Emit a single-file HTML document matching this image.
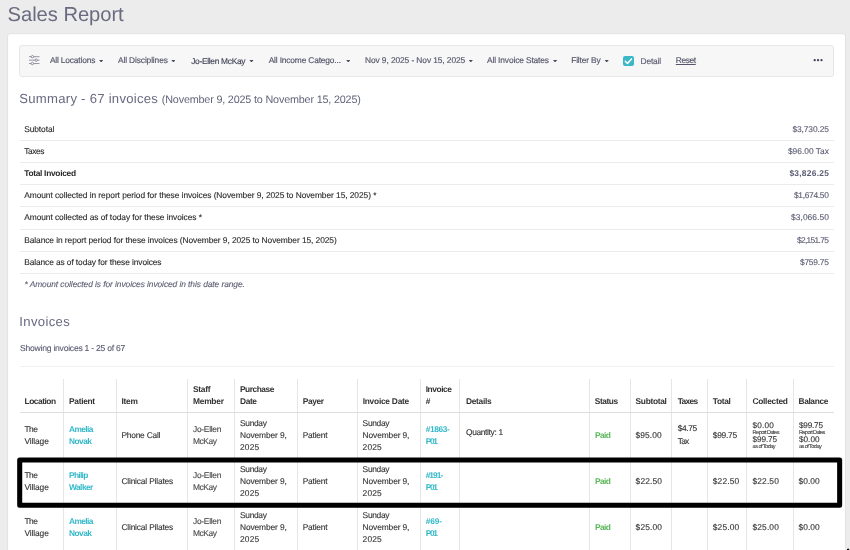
<!DOCTYPE html>
<html lang="en">
<head>
<meta charset="utf-8">
<title>Sales Report</title>
<style>
html,body{margin:0;padding:0;}
body{width:850px;height:550px;overflow:hidden;background:#ececec;position:relative;font-family:"Liberation Sans",sans-serif;}
.panel{position:absolute;left:0;top:0;width:850px;height:550px;}
.fbar{position:absolute;left:19.4px;top:44.8px;width:812.4px;height:30px;background:#f7f7f7;border:1px solid #e7e7e7;border-radius:3px;}
.txt{position:absolute;left:0;top:0;width:850px;height:550px;will-change:transform;text-rendering:geometricPrecision;-webkit-text-stroke:0.12px;}
.t{position:absolute;white-space:nowrap;display:block;}
.caret{position:absolute;display:block;clip-path:polygon(0 0,100% 0,50% 100%);}
.hl{position:absolute;left:19.5px;width:814px;height:1px;background:#ebebeb;}
.hl.hd{background:#dedede;}
.vl{position:absolute;top:379.2px;width:1px;height:175px;background:#e6e6e6;}
.frame{position:absolute;left:0;top:0;width:850px;height:550px;pointer-events:none;}
.cb{position:absolute;left:623.2px;top:55.6px;width:10.8px;height:10.6px;background:#3bb8c8;border-radius:2px;}
.cb svg{position:absolute;left:0;top:0;width:100%;height:100%;}
.dots{position:absolute;left:813px;top:58px;width:12px;height:4px;fill:#3f4056;}
.ficon{position:absolute;left:28px;top:54px;width:13px;height:13px;}
.cursor{position:absolute;left:842px;top:544px;width:8px;height:6px;}
</style>
</head>
<body>
<svg class="panel" width="850" height="550" viewBox="0 0 850 550"><rect x="7.6" y="33.7" width="837.9" height="540" rx="2.5" fill="#fff" stroke="#e3e3e3" stroke-width="1"/></svg>
<div class="fbar"></div>
<svg class="ficon" viewBox="0 0 13 13" fill="none" stroke="#747588" stroke-width="0.75">
<line x1="1" y1="2.7" x2="11.5" y2="2.7"/><line x1="1" y1="6.2" x2="11.5" y2="6.2"/><line x1="1" y1="9.55" x2="11.5" y2="9.55"/>
<circle cx="4.5" cy="2.7" r="1.2" fill="#f7f7f7"/><circle cx="8.2" cy="6.2" r="1.2" fill="#f7f7f7"/><circle cx="4.4" cy="9.55" r="1.2" fill="#f7f7f7"/>
</svg>
<div class="cb"><svg viewBox="0 0 10.8 10.6"><path d="M2.4 5.4 L4.5 7.5 L8.5 2.9" fill="none" stroke="#fff" stroke-width="1.5" stroke-linecap="round" stroke-linejoin="round"/></svg></div>
<svg class="dots" viewBox="0 0 12 4"><circle cx="1.7" cy="2.2" r="1.15"/><circle cx="5.05" cy="2.2" r="1.15"/><circle cx="8.5" cy="2.2" r="1.15"/></svg>
<div class="txt">
<span class="t" style="left:7.60px;top:5.00px;font-size:20.2px;line-height:20.2px;letter-spacing:-0.052px;color:#6a6b80;-webkit-text-stroke:0;">Sales Report</span>
<span class="t" style="left:49.90px;top:56.00px;font-size:8.4px;line-height:8.4px;letter-spacing:-0.169px;color:#55566b;-webkit-text-stroke:0.16px;">All Locations</span>
<i class="caret" style="left:99.10px;top:60.10px;width:4.2px;height:2.4px;background:#4a4b5e"></i>
<span class="t" style="left:118.00px;top:56.00px;font-size:8.4px;line-height:8.4px;letter-spacing:-0.130px;color:#55566b;-webkit-text-stroke:0.16px;">All Disciplines</span>
<i class="caret" style="left:171.30px;top:60.10px;width:4.2px;height:2.4px;background:#4a4b5e"></i>
<span class="t" style="left:191.20px;top:57.00px;font-size:8.4px;line-height:8.4px;letter-spacing:-0.296px;color:#45465a;-webkit-text-stroke:0.16px;">Jo-Ellen McKay</span>
<i class="caret" style="left:249.40px;top:60.10px;width:4.2px;height:2.4px;background:#4a4b5e"></i>
<span class="t" style="left:268.70px;top:56.00px;font-size:8.4px;line-height:8.4px;letter-spacing:-0.165px;color:#55566b;-webkit-text-stroke:0.16px;">All Income Catego...</span>
<i class="caret" style="left:346.20px;top:60.10px;width:4.2px;height:2.4px;background:#4a4b5e"></i>
<span class="t" style="left:365.00px;top:56.00px;font-size:8.4px;line-height:8.4px;letter-spacing:-0.089px;color:#55566b;-webkit-text-stroke:0.16px;">Nov 9, 2025 - Nov 15, 2025</span>
<i class="caret" style="left:468.70px;top:60.10px;width:4.2px;height:2.4px;background:#4a4b5e"></i>
<span class="t" style="left:487.00px;top:56.00px;font-size:8.4px;line-height:8.4px;letter-spacing:-0.131px;color:#55566b;-webkit-text-stroke:0.16px;">All Invoice States</span>
<i class="caret" style="left:553.00px;top:60.10px;width:4.2px;height:2.4px;background:#4a4b5e"></i>
<span class="t" style="left:571.20px;top:56.00px;font-size:8.4px;line-height:8.4px;letter-spacing:-0.163px;color:#55566b;-webkit-text-stroke:0.16px;">Filter By</span>
<i class="caret" style="left:604.60px;top:60.10px;width:4.2px;height:2.4px;background:#4a4b5e"></i>
<span class="t" style="left:640.50px;top:57.00px;font-size:8.4px;line-height:8.4px;letter-spacing:-0.155px;color:#5f6073;-webkit-text-stroke:0.16px;">Detail</span>
<span class="t" style="left:675.80px;top:56.00px;font-size:8.4px;line-height:8.4px;letter-spacing:-0.386px;color:#55566b;-webkit-text-stroke:0.16px;text-decoration:underline;">Reset</span>
<span class="t" style="left:19.30px;top:92.00px;font-size:13.1px;line-height:13.1px;letter-spacing:0.269px;color:#686980;-webkit-text-stroke:0;">Summary - 67 invoices</span>
<span class="t" style="left:161.80px;top:95.00px;font-size:10.8px;line-height:10.8px;letter-spacing:-0.179px;color:#62637a;-webkit-text-stroke:0;">(November 9, 2025 to November 15, 2025)</span>
<span class="t" style="left:24.20px;top:125.00px;font-size:8.4px;line-height:8.4px;letter-spacing:-0.075px;color:#2a2a2a;">Subtotal</span>
<span class="t" style="left:792.50px;top:125.00px;font-size:8.4px;line-height:8.4px;letter-spacing:-0.109px;color:#5b5c72;">$3,730.25</span>
<div class="hl" style="top:139.70px"></div>
<span class="t" style="left:24.20px;top:147.00px;font-size:8.4px;line-height:8.4px;letter-spacing:-0.411px;color:#2a2a2a;">Taxes</span>
<span class="t" style="left:787.90px;top:147.00px;font-size:8.4px;line-height:8.4px;letter-spacing:0.017px;color:#5b5c72;">$96.00 Tax</span>
<div class="hl" style="top:161.90px"></div>
<span class="t" style="left:24.20px;top:169.00px;font-size:8.4px;line-height:8.4px;letter-spacing:-0.296px;color:#2a2a2a;font-weight:bold;-webkit-text-stroke:0;">Total Invoiced</span>
<span class="t" style="left:789.40px;top:169.00px;font-size:8.4px;line-height:8.4px;letter-spacing:0.279px;color:#5b5c72;font-weight:bold;-webkit-text-stroke:0;">$3,826.25</span>
<div class="hl" style="top:184.10px"></div>
<span class="t" style="left:24.20px;top:191.00px;font-size:8.4px;line-height:8.4px;letter-spacing:-0.062px;color:#2a2a2a;">Amount collected in report period for these invoices (November 9, 2025 to November 15, 2025) *</span>
<span class="t" style="left:794.00px;top:191.00px;font-size:8.4px;line-height:8.4px;letter-spacing:-0.296px;color:#5b5c72;">$1,674.50</span>
<div class="hl" style="top:206.30px"></div>
<span class="t" style="left:24.20px;top:213.00px;font-size:8.4px;line-height:8.4px;letter-spacing:-0.060px;color:#2a2a2a;">Amount collected as of today for these invoices *</span>
<span class="t" style="left:791.00px;top:213.00px;font-size:8.4px;line-height:8.4px;letter-spacing:0.079px;color:#5b5c72;">$3,066.50</span>
<div class="hl" style="top:228.50px"></div>
<span class="t" style="left:24.20px;top:236.00px;font-size:8.4px;line-height:8.4px;letter-spacing:-0.072px;color:#2a2a2a;">Balance in report period for these invoices (November 9, 2025 to November 15, 2025)</span>
<span class="t" style="left:796.90px;top:236.00px;font-size:8.4px;line-height:8.4px;letter-spacing:-0.659px;color:#5b5c72;">$2,151.75</span>
<div class="hl" style="top:250.70px"></div>
<span class="t" style="left:24.20px;top:258.00px;font-size:8.4px;line-height:8.4px;letter-spacing:-0.100px;color:#2a2a2a;">Balance as of today for these invoices</span>
<span class="t" style="left:800.00px;top:258.00px;font-size:8.4px;line-height:8.4px;letter-spacing:-0.227px;color:#5b5c72;">$759.75</span>
<div class="hl" style="top:272.90px"></div>
<span class="t" style="left:24.50px;top:280.00px;font-size:8.4px;line-height:8.4px;letter-spacing:-0.068px;color:#5b5c72;font-style:italic;">* Amount collected is for invoices invoiced in this date range.</span>
<span class="t" style="left:19.30px;top:315.00px;font-size:13.1px;line-height:13.1px;letter-spacing:0.349px;color:#686980;-webkit-text-stroke:0;">Invoices</span>
<span class="t" style="left:20.00px;top:344.00px;font-size:8.6px;line-height:8.6px;letter-spacing:-0.245px;color:#5b5c72;">Showing invoices 1 - 25 of 67</span>
<div class="hl" style="top:366.2px;background:#f0f0f0"></div>
<div class="vl" style="left:63.00px"></div>
<div class="vl" style="left:116.20px"></div>
<div class="vl" style="left:187.30px"></div>
<div class="vl" style="left:234.10px"></div>
<div class="vl" style="left:297.20px"></div>
<div class="vl" style="left:357.30px"></div>
<div class="vl" style="left:420.10px"></div>
<div class="vl" style="left:459.30px"></div>
<div class="vl" style="left:589.10px"></div>
<div class="vl" style="left:629.70px"></div>
<div class="vl" style="left:671.30px"></div>
<div class="vl" style="left:706.90px"></div>
<div class="vl" style="left:746.30px"></div>
<div class="vl" style="left:793.00px"></div>
<div class="hl hd" style="top:412px"></div>
<div class="hl" style="top:458px"></div>
<div class="hl" style="top:504px"></div>
<span class="t" style="left:24.50px;top:397.00px;font-size:8.4px;line-height:8.4px;letter-spacing:-0.471px;color:#333;font-weight:bold;-webkit-text-stroke:0;">Location</span>
<span class="t" style="left:69.00px;top:397.00px;font-size:8.4px;line-height:8.4px;letter-spacing:-0.301px;color:#333;font-weight:bold;-webkit-text-stroke:0;">Patient</span>
<span class="t" style="left:121.50px;top:397.00px;font-size:8.4px;line-height:8.4px;letter-spacing:-0.257px;color:#333;font-weight:bold;-webkit-text-stroke:0;">Item</span>
<span class="t" style="left:193.00px;top:385.00px;font-size:8.4px;line-height:8.4px;letter-spacing:-0.292px;color:#333;font-weight:bold;-webkit-text-stroke:0;">Staff</span>
<span class="t" style="left:193.00px;top:397.00px;font-size:8.4px;line-height:8.4px;letter-spacing:-0.242px;color:#333;font-weight:bold;-webkit-text-stroke:0;">Member</span>
<span class="t" style="left:240.00px;top:385.00px;font-size:8.4px;line-height:8.4px;letter-spacing:-0.474px;color:#333;font-weight:bold;-webkit-text-stroke:0;">Purchase</span>
<span class="t" style="left:240.00px;top:397.00px;font-size:8.4px;line-height:8.4px;letter-spacing:-0.402px;color:#333;font-weight:bold;-webkit-text-stroke:0;">Date</span>
<span class="t" style="left:302.80px;top:397.00px;font-size:8.4px;line-height:8.4px;letter-spacing:-0.397px;color:#333;font-weight:bold;-webkit-text-stroke:0;">Payer</span>
<span class="t" style="left:362.70px;top:397.00px;font-size:8.4px;line-height:8.4px;letter-spacing:-0.253px;color:#333;font-weight:bold;-webkit-text-stroke:0;">Invoice Date</span>
<span class="t" style="left:425.70px;top:385.00px;font-size:8.4px;line-height:8.4px;letter-spacing:-0.441px;color:#333;font-weight:bold;-webkit-text-stroke:0;">Invoice</span>
<span class="t" style="left:425.70px;top:397.00px;font-size:8.4px;line-height:8.4px;letter-spacing:-0.372px;color:#333;font-weight:bold;-webkit-text-stroke:0;">#</span>
<span class="t" style="left:466.00px;top:397.00px;font-size:8.4px;line-height:8.4px;letter-spacing:-0.308px;color:#333;font-weight:bold;-webkit-text-stroke:0;">Details</span>
<span class="t" style="left:594.80px;top:397.00px;font-size:8.4px;line-height:8.4px;letter-spacing:-0.454px;color:#333;font-weight:bold;-webkit-text-stroke:0;">Status</span>
<span class="t" style="left:635.60px;top:397.00px;font-size:8.4px;line-height:8.4px;letter-spacing:-0.314px;color:#333;font-weight:bold;-webkit-text-stroke:0;">Subtotal</span>
<span class="t" style="left:677.80px;top:397.00px;font-size:8.4px;line-height:8.4px;letter-spacing:-0.699px;color:#333;font-weight:bold;-webkit-text-stroke:0;">Taxes</span>
<span class="t" style="left:712.80px;top:397.00px;font-size:8.4px;line-height:8.4px;letter-spacing:-0.335px;color:#333;font-weight:bold;-webkit-text-stroke:0;">Total</span>
<span class="t" style="left:752.50px;top:397.00px;font-size:8.4px;line-height:8.4px;letter-spacing:-0.289px;color:#333;font-weight:bold;-webkit-text-stroke:0;">Collected</span>
<span class="t" style="left:798.50px;top:397.00px;font-size:8.4px;line-height:8.4px;letter-spacing:-0.386px;color:#333;font-weight:bold;-webkit-text-stroke:0;">Balance</span>
<span class="t" style="left:24.50px;top:425.00px;font-size:8.4px;line-height:8.4px;letter-spacing:-0.537px;color:#333;">The</span>
<span class="t" style="left:24.50px;top:437.00px;font-size:8.4px;line-height:8.4px;letter-spacing:-0.111px;color:#333;">Village</span>
<span class="t" style="left:69.00px;top:425.00px;font-size:8.4px;line-height:8.4px;letter-spacing:-0.629px;color:#35b9c9;font-weight:bold;-webkit-text-stroke:0;">Amelia</span>
<span class="t" style="left:69.00px;top:437.00px;font-size:8.4px;line-height:8.4px;letter-spacing:-0.553px;color:#35b9c9;font-weight:bold;-webkit-text-stroke:0;">Novak</span>
<span class="t" style="left:121.40px;top:431.00px;font-size:8.4px;line-height:8.4px;letter-spacing:-0.210px;color:#333;">Phone Call</span>
<span class="t" style="left:193.00px;top:425.00px;font-size:8.4px;line-height:8.4px;letter-spacing:-0.264px;color:#484848;">Jo-Ellen</span>
<span class="t" style="left:193.00px;top:437.00px;font-size:8.4px;line-height:8.4px;letter-spacing:-0.418px;color:#484848;">McKay</span>
<span class="t" style="left:240.00px;top:419.00px;font-size:8.4px;line-height:8.4px;letter-spacing:-0.298px;color:#333;">Sunday</span>
<span class="t" style="left:240.00px;top:431.00px;font-size:8.4px;line-height:8.4px;letter-spacing:-0.109px;color:#333;">November 9,</span>
<span class="t" style="left:240.00px;top:443.00px;font-size:8.4px;line-height:8.4px;letter-spacing:0.171px;color:#333;">2025</span>
<span class="t" style="left:362.60px;top:419.00px;font-size:8.4px;line-height:8.4px;letter-spacing:-0.298px;color:#333;">Sunday</span>
<span class="t" style="left:362.60px;top:431.00px;font-size:8.4px;line-height:8.4px;letter-spacing:-0.109px;color:#333;">November 9,</span>
<span class="t" style="left:362.60px;top:443.00px;font-size:8.4px;line-height:8.4px;letter-spacing:0.171px;color:#333;">2025</span>
<span class="t" style="left:302.70px;top:431.00px;font-size:8.4px;line-height:8.4px;letter-spacing:-0.192px;color:#333;">Patient</span>
<span class="t" style="left:425.70px;top:425.00px;font-size:8.4px;line-height:8.4px;letter-spacing:-0.371px;color:#35b9c9;font-weight:bold;-webkit-text-stroke:0;">#1863-</span>
<span class="t" style="left:425.70px;top:437.00px;font-size:8.4px;line-height:8.4px;letter-spacing:-1.323px;color:#35b9c9;font-weight:bold;-webkit-text-stroke:0;">P01</span>
<span class="t" style="left:466.00px;top:428.00px;font-size:8.4px;line-height:8.4px;letter-spacing:-0.342px;color:#333;">Quantity: 1</span>
<span class="t" style="left:595.00px;top:431.00px;font-size:8.4px;line-height:8.4px;letter-spacing:-0.646px;color:#5cb85c;font-weight:bold;-webkit-text-stroke:0;">Paid</span>
<span class="t" style="left:635.60px;top:431.00px;font-size:8.4px;line-height:8.4px;letter-spacing:0.082px;color:#333;">$95.00</span>
<span class="t" style="left:677.80px;top:424.00px;font-size:8.4px;line-height:8.4px;letter-spacing:-0.380px;color:#333;">$4.75</span>
<span class="t" style="left:677.80px;top:437.00px;font-size:8.4px;line-height:8.4px;letter-spacing:-0.836px;color:#333;">Tax</span>
<span class="t" style="left:712.80px;top:431.00px;font-size:8.4px;line-height:8.4px;letter-spacing:-0.258px;color:#333;">$99.75</span>
<span class="t" style="left:752.60px;top:422.00px;font-size:8.2px;line-height:8.2px;letter-spacing:0.195px;color:#333;">$0.00</span>
<span class="t" style="left:752.60px;top:431.00px;font-size:5.6px;line-height:5.6px;letter-spacing:-0.554px;color:#444;">Report Dates</span>
<span class="t" style="left:752.60px;top:436.00px;font-size:8.2px;line-height:8.2px;letter-spacing:-0.116px;color:#333;">$99.75</span>
<span class="t" style="left:752.60px;top:445.00px;font-size:5.6px;line-height:5.6px;letter-spacing:-0.554px;color:#444;">as of Today</span>
<span class="t" style="left:798.90px;top:422.00px;font-size:8.2px;line-height:8.2px;letter-spacing:-0.176px;color:#333;">$99.75</span>
<span class="t" style="left:798.90px;top:431.00px;font-size:5.6px;line-height:5.6px;letter-spacing:-0.590px;color:#444;">Report Dates</span>
<span class="t" style="left:798.90px;top:436.00px;font-size:8.2px;line-height:8.2px;letter-spacing:0.045px;color:#333;">$0.00</span>
<span class="t" style="left:798.90px;top:445.00px;font-size:5.6px;line-height:5.6px;letter-spacing:-0.564px;color:#444;">as of Today</span>
<span class="t" style="left:24.50px;top:471.00px;font-size:8.4px;line-height:8.4px;letter-spacing:-0.537px;color:#333;">The</span>
<span class="t" style="left:24.50px;top:483.00px;font-size:8.4px;line-height:8.4px;letter-spacing:-0.111px;color:#333;">Village</span>
<span class="t" style="left:69.00px;top:471.00px;font-size:8.4px;line-height:8.4px;letter-spacing:-0.693px;color:#35b9c9;font-weight:bold;-webkit-text-stroke:0;">Philip</span>
<span class="t" style="left:69.00px;top:483.00px;font-size:8.4px;line-height:8.4px;letter-spacing:-0.567px;color:#35b9c9;font-weight:bold;-webkit-text-stroke:0;">Walker</span>
<span class="t" style="left:121.40px;top:477.00px;font-size:8.4px;line-height:8.4px;letter-spacing:-0.175px;color:#333;">Clinical Pilates</span>
<span class="t" style="left:193.00px;top:471.00px;font-size:8.4px;line-height:8.4px;letter-spacing:-0.264px;color:#484848;">Jo-Ellen</span>
<span class="t" style="left:193.00px;top:483.00px;font-size:8.4px;line-height:8.4px;letter-spacing:-0.418px;color:#484848;">McKay</span>
<span class="t" style="left:240.00px;top:465.00px;font-size:8.4px;line-height:8.4px;letter-spacing:-0.298px;color:#333;">Sunday</span>
<span class="t" style="left:240.00px;top:477.00px;font-size:8.4px;line-height:8.4px;letter-spacing:-0.109px;color:#333;">November 9,</span>
<span class="t" style="left:240.00px;top:489.00px;font-size:8.4px;line-height:8.4px;letter-spacing:0.171px;color:#333;">2025</span>
<span class="t" style="left:362.60px;top:465.00px;font-size:8.4px;line-height:8.4px;letter-spacing:-0.298px;color:#333;">Sunday</span>
<span class="t" style="left:362.60px;top:477.00px;font-size:8.4px;line-height:8.4px;letter-spacing:-0.109px;color:#333;">November 9,</span>
<span class="t" style="left:362.60px;top:489.00px;font-size:8.4px;line-height:8.4px;letter-spacing:0.171px;color:#333;">2025</span>
<span class="t" style="left:302.70px;top:477.00px;font-size:8.4px;line-height:8.4px;letter-spacing:-0.192px;color:#333;">Patient</span>
<span class="t" style="left:425.70px;top:471.00px;font-size:8.4px;line-height:8.4px;letter-spacing:-0.971px;color:#35b9c9;font-weight:bold;-webkit-text-stroke:0;">#191-</span>
<span class="t" style="left:425.70px;top:483.00px;font-size:8.4px;line-height:8.4px;letter-spacing:-1.323px;color:#35b9c9;font-weight:bold;-webkit-text-stroke:0;">P01</span>
<span class="t" style="left:595.00px;top:477.00px;font-size:8.4px;line-height:8.4px;letter-spacing:-0.646px;color:#5cb85c;font-weight:bold;-webkit-text-stroke:0;">Paid</span>
<span class="t" style="left:635.60px;top:477.00px;font-size:8.4px;line-height:8.4px;letter-spacing:0.142px;color:#333;">$22.50</span>
<span class="t" style="left:712.80px;top:477.00px;font-size:8.4px;line-height:8.4px;letter-spacing:0.162px;color:#333;">$22.50</span>
<span class="t" style="left:752.50px;top:477.00px;font-size:8.4px;line-height:8.4px;letter-spacing:0.142px;color:#333;">$22.50</span>
<span class="t" style="left:798.50px;top:477.00px;font-size:8.4px;line-height:8.4px;letter-spacing:0.070px;color:#333;">$0.00</span>
<span class="t" style="left:24.50px;top:517.00px;font-size:8.4px;line-height:8.4px;letter-spacing:-0.537px;color:#333;">The</span>
<span class="t" style="left:24.50px;top:529.00px;font-size:8.4px;line-height:8.4px;letter-spacing:-0.111px;color:#333;">Village</span>
<span class="t" style="left:69.00px;top:517.00px;font-size:8.4px;line-height:8.4px;letter-spacing:-0.629px;color:#35b9c9;font-weight:bold;-webkit-text-stroke:0;">Amelia</span>
<span class="t" style="left:69.00px;top:529.00px;font-size:8.4px;line-height:8.4px;letter-spacing:-0.553px;color:#35b9c9;font-weight:bold;-webkit-text-stroke:0;">Novak</span>
<span class="t" style="left:121.40px;top:523.00px;font-size:8.4px;line-height:8.4px;letter-spacing:-0.175px;color:#333;">Clinical Pilates</span>
<span class="t" style="left:193.00px;top:517.00px;font-size:8.4px;line-height:8.4px;letter-spacing:-0.264px;color:#484848;">Jo-Ellen</span>
<span class="t" style="left:193.00px;top:529.00px;font-size:8.4px;line-height:8.4px;letter-spacing:-0.418px;color:#484848;">McKay</span>
<span class="t" style="left:240.00px;top:511.00px;font-size:8.4px;line-height:8.4px;letter-spacing:-0.298px;color:#333;">Sunday</span>
<span class="t" style="left:240.00px;top:523.00px;font-size:8.4px;line-height:8.4px;letter-spacing:-0.109px;color:#333;">November 9,</span>
<span class="t" style="left:240.00px;top:535.00px;font-size:8.4px;line-height:8.4px;letter-spacing:0.171px;color:#333;">2025</span>
<span class="t" style="left:362.60px;top:511.00px;font-size:8.4px;line-height:8.4px;letter-spacing:-0.298px;color:#333;">Sunday</span>
<span class="t" style="left:362.60px;top:523.00px;font-size:8.4px;line-height:8.4px;letter-spacing:-0.109px;color:#333;">November 9,</span>
<span class="t" style="left:362.60px;top:535.00px;font-size:8.4px;line-height:8.4px;letter-spacing:0.171px;color:#333;">2025</span>
<span class="t" style="left:302.70px;top:523.00px;font-size:8.4px;line-height:8.4px;letter-spacing:-0.192px;color:#333;">Patient</span>
<span class="t" style="left:425.70px;top:517.00px;font-size:8.4px;line-height:8.4px;letter-spacing:-0.104px;color:#35b9c9;font-weight:bold;-webkit-text-stroke:0;">#69-</span>
<span class="t" style="left:425.70px;top:529.00px;font-size:8.4px;line-height:8.4px;letter-spacing:-1.323px;color:#35b9c9;font-weight:bold;-webkit-text-stroke:0;">P01</span>
<span class="t" style="left:595.00px;top:523.00px;font-size:8.4px;line-height:8.4px;letter-spacing:-0.646px;color:#5cb85c;font-weight:bold;-webkit-text-stroke:0;">Paid</span>
<span class="t" style="left:635.60px;top:523.00px;font-size:8.4px;line-height:8.4px;letter-spacing:0.142px;color:#333;">$25.00</span>
<span class="t" style="left:712.80px;top:523.00px;font-size:8.4px;line-height:8.4px;letter-spacing:0.162px;color:#333;">$25.00</span>
<span class="t" style="left:752.50px;top:523.00px;font-size:8.4px;line-height:8.4px;letter-spacing:0.142px;color:#333;">$25.00</span>
<span class="t" style="left:798.50px;top:523.00px;font-size:8.4px;line-height:8.4px;letter-spacing:0.070px;color:#333;">$0.00</span>
</div>
<svg class="frame" width="850" height="550" viewBox="0 0 850 550"><rect x="19.7" y="460.05" width="819.95" height="45.25" fill="none" stroke="#000" stroke-width="5.05" stroke-linejoin="round"/></svg>
<svg class="cursor" viewBox="0 0 8 6"><path d="M3.6 6.6 L6 3.5 L9 6.8 Z" fill="#000" stroke="#fff" stroke-width="1" stroke-linejoin="round"/></svg>
</body>
</html>
